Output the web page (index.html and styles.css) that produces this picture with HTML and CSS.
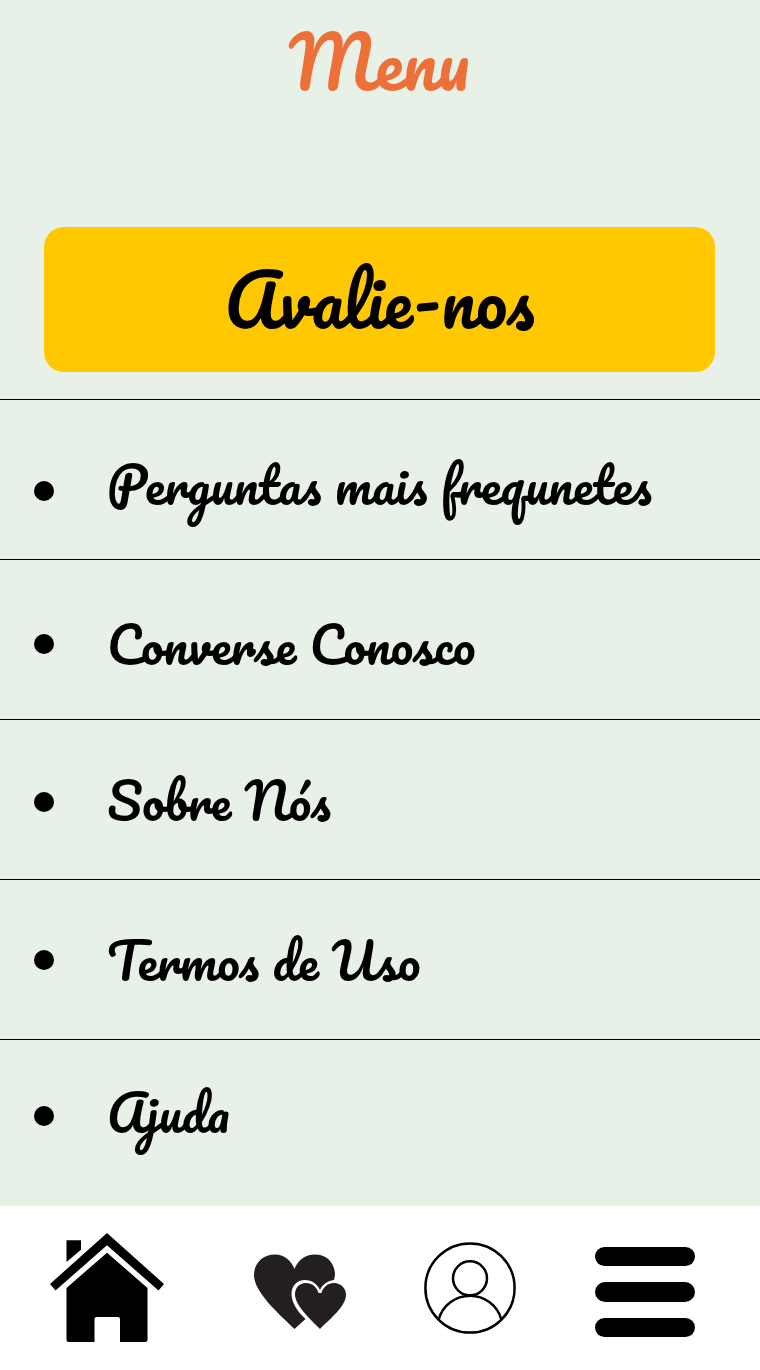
FILE: index.html
```
<!DOCTYPE html>
<html lang="pt-BR">
<head>
<meta charset="utf-8">
<title>Menu</title>
<link rel="stylesheet" href="styles.css">
</head>
<body>
<main class="screen">
  <h1 class="title">Menu</h1>
  <a class="rate">Avalie-nos</a>
  <ul class="list">
    <li class="item item-faq"><span class="bullet"></span><span class="label">Perguntas mais frequnetes</span></li>
    <li class="item item-chat"><span class="bullet"></span><span class="label">Converse Conosco</span></li>
    <li class="item item-about"><span class="bullet"></span><span class="label">Sobre Nós</span></li>
    <li class="item item-terms"><span class="bullet"></span><span class="label">Termos de Uso</span></li>
    <li class="item item-help"><span class="bullet"></span><span class="label">Ajuda</span></li>
  </ul>
  <nav class="nav">
    <svg class="icon-home" width="114" height="110" viewBox="50 1233 114 110">
      <path d="M66.5 1240.3H81v9.5L66.5 1262Z"/>
      <path d="M107 1233l57 51-5.5 6.5L107 1245.300 55.500 1290.500 50 1284Z"/>
      <path d="M107 1252.700l40.500 35.300v52q0 2-2 2H120v-23q0-2-2-2H96.500q-2 0-2 2v23H68.500q-2 0-2-2v-52Z"/>
    </svg>
    <svg class="icon-hearts" width="94" height="76" viewBox="253 1254 94 76">
      <path d="M294.500 1329C278 1313 254 1292 254 1275C254 1263 263 1254.500 275 1254.500C284 1254.500 291 1260 294.500 1269C298 1260 305 1254.500 315 1254.500C327 1254.500 335 1263 335 1275L334 1280C327 1281 322 1285 320 1290C317 1284 312 1280 305 1280C297 1280 291.500 1286 291.500 1294C291.500 1303 298 1312 305.500 1319Z"/>
      <path d="M320 1329C310 1319 295 1305 295 1294.500C295 1288 299 1283 306 1283C312 1283 317 1287 318.500 1293H321.500C323 1287 328 1283 334 1283C341 1283 346 1288 346 1295C346 1306 330 1319 320 1329Z"/>
    </svg>
    <svg class="icon-user" width="92" height="92" viewBox="424 1242 92 92">
      <circle cx="470" cy="1288" r="44.600"/>
      <circle cx="470" cy="1278.300" r="17"/>
      <path d="M438.700 1319.500A32.500 32.500 0 0 1 501.300 1319.500"/>
    </svg>
    <div class="icon-menu"><span></span><span></span><span></span></div>
  </nav>
</main>
</body>
</html>
```
FILE: styles.css
```
* { box-sizing: border-box; }

body {
  margin: 0;
  background: #e8f1e8;
  color: #000;
  font-family: Pacifico, cursive;
}

.screen {
  display: flex;
  flex-direction: column;
  width: 760px;
  height: 1370px;
}

.title {
  height: 227px;
  margin: 0;
  padding: 27px 2px 0 0;
  color: #ee7039;
  font-size: 70px;
  font-weight: 400;
  line-height: 70px;
  text-align: center;
}

.rate {
  height: 145px;
  margin: 0 45px 27px 44px;
  padding-top: 38px;
  border-radius: 20px;
  background: #ffc800;
  font-size: 70px;
  line-height: 70px;
  text-align: center;
}

.list {
  height: 807px;
  margin: 0;
  padding: 0;
  list-style: none;
}

.item {
  display: flex;
  align-items: flex-start;
  gap: 53px;
  height: 160px;
  padding-left: 34px;
  border-top: 1px solid #000;
}

.bullet {
  flex: none;
  width: 20px;
  height: 20px;
  border-radius: 50%;
  background: #000;
}

.label {
  font-size: 50px;
  line-height: 50px;
  white-space: nowrap;
}

.item-faq .bullet { margin-top: 81px; }
.item-chat .bullet { margin-top: 74px; }
.item-about .bullet { margin-top: 72px; }
.item-terms .bullet { margin-top: 70px; }
.item-help .bullet { margin-top: 66px; }

.item-faq .label,
.item-chat .label { margin-top: 59px; }
.item-about .label,
.item-terms .label { margin-top: 55px; }
.item-help .label { margin-top: 47px; }

.item-help { height: 167px; }

.nav {
  display: flex;
  align-items: flex-start;
  height: 164px;
  padding: 27px 0 0 50px;
  background: #fff;
}

.icon-hearts {
  margin: 21px 0 0 89px;
  fill: #231f20;
}

.icon-user {
  margin: 9px 0 0 77px;
  fill: none;
  stroke: #000;
  stroke-width: 2.5px;
}

.icon-menu {
  display: flex;
  flex-direction: column;
  gap: 16px;
  margin: 13.500px 0 0 79px;
}

.icon-menu span {
  width: 100px;
  height: 19.500px;
  border-radius: 10px;
  background: #000;
}
```
